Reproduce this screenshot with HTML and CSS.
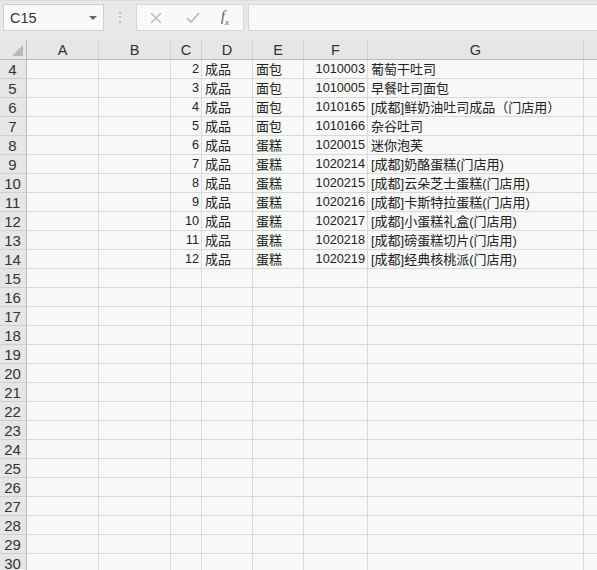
FILE: index.html
```html
<!DOCTYPE html>
<html>
<head>
<meta charset="utf-8">
<link rel="stylesheet" href="styles.css">
</head>
<body>
<div class="toolbar">
  <div class="namebox">
    <span class="name">C15</span>
    <span class="caret"></span>
  </div>
  <div class="grip">⋮</div>
  <div class="fbuttons">
    <svg class="ic" width="14" height="14" viewBox="0 0 14 14"><path d="M2 2 L12 12 M12 2 L2 12" stroke="#b8b8b8" stroke-width="1.4" fill="none"/></svg>
    <svg class="ic" width="16" height="14" viewBox="0 0 16 14"><path d="M2 7 L6 11 L14 2" stroke="#b8b8b8" stroke-width="1.6" fill="none"/></svg>
    <span class="fx"><i>f</i><sub>x</sub></span>
  </div>
  <div class="finput"></div>
</div>
<div class="sheet" id="sheet">
  <div class="corner"><span class="tri"></span></div>
  <div class="ch">A</div><div class="ch">B</div><div class="ch">C</div><div class="ch">D</div><div class="ch">E</div><div class="ch">F</div><div class="ch">G</div><div class="ch last"></div>
</div>
<script src="app.js"></script>
</body>
</html>
```
FILE: app.js
```js
const data = {
  4: [2, "成品", "面包", "1010003", "葡萄干吐司"],
  5: [3, "成品", "面包", "1010005", "早餐吐司面包"],
  6: [4, "成品", "面包", "1010165", "[成都]鲜奶油吐司成品（门店用）"],
  7: [5, "成品", "面包", "1010166", "杂谷吐司"],
  8: [6, "成品", "蛋糕", "1020015", "迷你泡芙"],
  9: [7, "成品", "蛋糕", "1020214", "[成都]奶酪蛋糕(门店用)"],
  10: [8, "成品", "蛋糕", "1020215", "[成都]云朵芝士蛋糕(门店用)"],
  11: [9, "成品", "蛋糕", "1020216", "[成都]卡斯特拉蛋糕(门店用)"],
  12: [10, "成品", "蛋糕", "1020217", "[成都]小蛋糕礼盒(门店用)"],
  13: [11, "成品", "蛋糕", "1020218", "[成都]磅蛋糕切片(门店用)"],
  14: [12, "成品", "蛋糕", "1020219", "[成都]经典核桃派(门店用)"]
};
const sheet = document.getElementById("sheet");
let html = "";
for (let r = 4; r <= 30; r++) {
  const d = data[r];
  html += '<div class="rh">' + r + '</div>';
  html += '<div class="c"></div><div class="c"></div>';
  html += '<div class="c num">' + (d ? d[0] : "") + '</div>';
  html += '<div class="c">' + (d ? d[1] : "") + '</div>';
  html += '<div class="c">' + (d ? d[2] : "") + '</div>';
  html += '<div class="c num">' + (d ? d[3] : "") + '</div>';
  html += '<div class="c">' + (d ? d[4] : "") + '</div>';
  html += '<div class="c last"></div>';
}
sheet.insertAdjacentHTML("beforeend", html);
```
FILE: styles.css
```css
* { box-sizing: border-box; }
html, body { margin: 0; padding: 0; }
body {
  width: 597px;
  height: 570px;
  overflow: hidden;
  background: #f8f8f8;
  font-family: "Liberation Sans", "Noto Sans CJK SC", sans-serif;
  color: #222;
}
.toolbar {
  height: 40px;
  background: #e9e9e9;
  border-top: 1px solid #dcdcdc;
  display: flex;
  align-items: flex-start;
  padding-top: 3px;
  padding-left: 3px;
}
.namebox {
  width: 101px;
  height: 27px;
  background: #f9f9f9;
  border: 1px solid #cfcfcf;
  display: flex;
  align-items: center;
  justify-content: space-between;
  padding: 0 6px 0 6px;
}
.name { font-size: 14.5px; color: #333; }
.caret {
  width: 0; height: 0;
  border-left: 4px solid transparent;
  border-right: 4px solid transparent;
  border-top: 4px solid #666;
}
.grip {
  width: 32px;
  text-align: center;
  color: #b5b5b5;
  font-size: 14px;
  line-height: 27px;
}
.fbuttons {
  width: 108px;
  height: 27px;
  background: #f9f9f9;
  border: 1px solid #d6d6d6;
  display: flex;
  align-items: center;
  padding-left: 12px;
  gap: 22px;
}
.fx {
  font-family: "Liberation Serif", serif;
  font-size: 14px;
  color: #555;
  margin-left: -2px;
}
.fx sub { font-size: 9px; font-style: italic; }
.finput {
  margin-left: 4px;
  flex: 1;
  height: 27px;
  background: #f9f9f9;
  border: 1px solid #d6d6d6;
  border-right: none;
}
.sheet {
  display: grid;
  grid-template-columns: 27px 72px 72px 31px 51px 51px 64px 216px 1fr;
  grid-auto-rows: 19px;
  grid-template-rows: 20px;
}
.corner, .ch {
  background: #e6e6e6;
  border-right: 1px solid #d0d0d0;
  border-bottom: 1px solid #b8b8b8;
}
.corner { position: relative; border-right-color: #b8b8b8; }
.tri {
  position: absolute;
  right: 3px;
  bottom: 3px;
  width: 0; height: 0;
  border-left: 11px solid transparent;
  border-bottom: 11px solid #b9b9b9;
}
.ch {
  text-align: center;
  font-size: 14.5px;
  line-height: 21px;
  color: #333;
}
.rh {
  background: #e6e6e6;
  border-right: 1px solid #b8b8b8;
  border-bottom: 1px solid #d0d0d0;
  text-align: center;
  font-size: 15px;
  line-height: 19px;
  color: #333;
  padding-right: 1px;
}
.c {
  border-right: 1px solid #d9d9d9;
  border-bottom: 1px solid #d9d9d9;
  font-size: 13px;
  line-height: 19px;
  padding: 0 2px 0 3px;
  white-space: nowrap;
  overflow: hidden;
}
.c.num { text-align: right; font-size: 12.7px; }
.last { border-right: none; }
```
